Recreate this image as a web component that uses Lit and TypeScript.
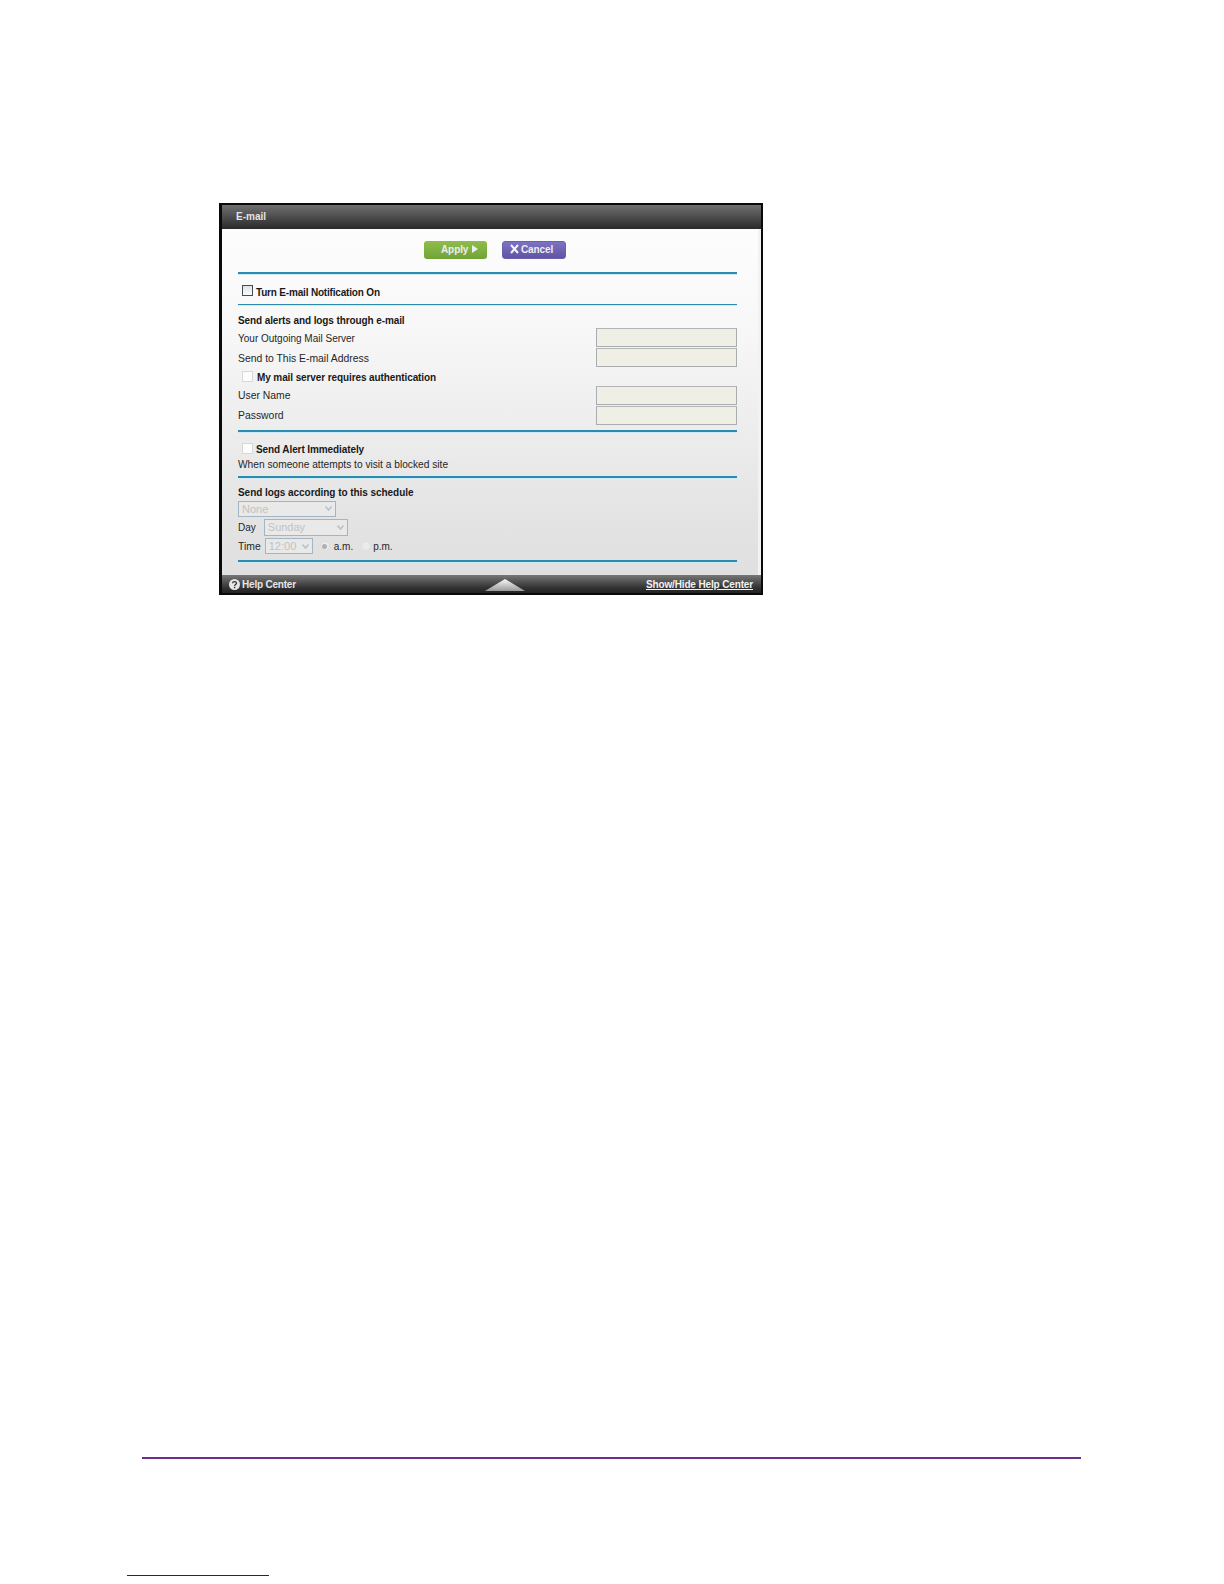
import { LitElement, html, css } from "lit";
import { customElement } from "lit/decorators.js";

@customElement("app-root")
export class AppRoot extends LitElement {
  static styles = css`
    :host { display: block; width: 1224px; height: 1584px; background: #fff; font-family: "Liberation Sans", Arial, sans-serif; overflow: hidden; }
    .page { height: 1584px; display: flex; flex-direction: column; box-sizing: border-box; padding-top: 203px; }
    .win { width: 544px; height: 392px; margin-left: 219px; box-sizing: border-box; border: 2px solid #0a0a0a; border-left-width: 3px; display: flex; flex-direction: column; background: #fff; flex: none; }
    .title { height: 24px; background: linear-gradient(#6f6f6f, #2a2a2a); color: #e4e4e4; font-size: 10px; font-weight: bold; display: flex; align-items: center; padding: 0 0 2px 14px; flex: none; box-sizing: border-box; }
    .body { flex: 1; background: linear-gradient(#fdfdfd, #f7f7f7 30%, #e3e3e3 85%, #e0e0e0); padding: 0 24px 0 16px; color: #262626; font-size: 10px; box-shadow: inset -3px 0 0 #f2f2f2; }
    .actions { height: 43px; display: flex; justify-content: center; align-items: flex-start; gap: 15px; padding: 12px 0 0 15px; box-sizing: border-box; }
    .btn { height: 18px; border-radius: 3px; color: #eee; font-size: 10px; letter-spacing: -0.1px; font-weight: bold; display: flex; align-items: center; box-sizing: border-box; padding-bottom: 2px; }
    .apply { width: 63px; background: linear-gradient(#8fbd4c, #70a336); padding-left: 17px; gap: 4px; }
    .cancel { width: 64px; background: linear-gradient(#7d72c4, #5f55a3); padding-left: 7px; gap: 2px; border: 1px solid #6a60ae; }
    .rule { height: 2px; background: #2c8cae; box-shadow: 0 1px 0 #cfe9f5; flex: none; }
    .rule.thin { height: 1px; }
    .row { display: flex; align-items: center; }
    .head { font-weight: bold; color: #191919; font-size: 10px; letter-spacing: -0.1px; }
    .check { width: 11px; height: 11px; box-sizing: border-box; border: 1px solid #d8d8d8; background: #fcfcfc; flex: none; }
    .check.up { margin-bottom: 2px; }
    .check.dark { border-color: #444c54; background: linear-gradient(#e0e3e6, #fafafa); margin-bottom: 3px; }
    .sec1 { height: 30px; padding: 6px 0 0 4px; gap: 3px; box-sizing: border-box; }
    .sec1 .head { letter-spacing: -0.18px; }
    .sec2 { height: 125px; display: flex; flex-direction: column; }
    .sec2 > .head { margin-top: 8px; height: 14px; display: flex; align-items: center; flex: none; }
    .field { display: flex; justify-content: space-between; align-items: center; height: 20px; flex: none; }
    .low { padding-top: 2px; }
    .wide { font-size: 10.4px; }
    .input { width: 141px; height: 19px; box-sizing: border-box; background: #f0efe6; border: 1px solid #a8adaf; border-top-color: #b4b4b4; }
    .auth { height: 18px; padding-left: 4px; gap: 4px; flex: none; }
    .auth .head { margin-top: 3px; }
    .sec3 { height: 44px; padding-top: 10px; box-sizing: border-box; }
    .sec3 .row { gap: 3px; padding-left: 4px; height: 15px; }
    .sec3 .sub { height: 14px; display: flex; align-items: center; font-size: 10.2px; }
    .sec4 { height: 82px; padding-top: 7px; box-sizing: border-box; }
    .sec4 > .head { height: 14px; display: flex; align-items: center; letter-spacing: -0.05px; }
    .select { height: 16px; box-sizing: border-box; border: 1px solid #a3b4c2; background: #e9e9e9; color: #c2c2c2; font-size: 11px; display: flex; align-items: center; justify-content: space-between; padding-left: 3px; }
    .select svg { flex: none; margin-right: 2px; }
    .sched { display: flex; align-items: center; height: 18px; }
    .sched.first { height: 19px; }
    .sched.last { height: 20px; }
    .s-none { width: 98px; }
    .s-day { width: 84px; height: 17px; margin-left: 8px; }
    .s-time { width: 48px; margin-left: 4px; }
    .radio { width: 10px; height: 10px; border-radius: 50%; border: 1px solid #dedede; box-sizing: border-box; background: #ebebeb; display: flex; align-items: center; justify-content: center; flex: none; }
    .radio i { width: 5px; height: 5px; border-radius: 50%; background: #b0b0b0; }
    .am { margin-left: 7px; }
    .pm { margin-left: 8px; }
    .am-t { margin-left: 4px; }
    .pm-t { margin-left: 2px; }
    .foot { height: 18px; flex: none; background: linear-gradient(#777, #333 70%, #222); color: #e6e6e6; font-size: 10px; font-weight: bold; display: flex; align-items: center; justify-content: space-between; padding: 0 8px 0 7px; position: relative; box-sizing: border-box; }
    .foot .left { display: flex; align-items: center; gap: 2px; letter-spacing: -0.2px; }
    .foot u { color: #f2f2f2; letter-spacing: -0.14px; }
    .tri { position: absolute; left: 263px; bottom: 2px; }
    .gap-p { height: 862px; flex: none; }
    .purple { height: 1.5px; background: #6e2c8c; margin-left: 142px; width: 939px; flex: none; }
    .gap-b { height: 116px; flex: none; }
    .blue { height: 1.5px; background: #1a1a9e; margin-left: 127px; width: 142px; flex: none; }
  `;

  render() {
    const arrow = html`<svg width="9" height="7" viewBox="0 0 9 7"><path d="M1.5 1.5 L4.5 5 L7.5 1.5" fill="none" stroke="#b8c2cc" stroke-width="1.6"/></svg>`;
    return html`
      <div class="page">
        <div class="win">
          <div class="title">E-mail</div>
          <div class="body">
            <div class="actions">
              <div class="btn apply">Apply<svg width="6" height="8" viewBox="0 0 6 8"><path d="M0 0 L6 4 L0 8Z" fill="#eee"/></svg></div>
              <div class="btn cancel"><svg width="9" height="10" viewBox="0 0 9 10"><path d="M1 1 L8 9 M8 1 L1 9" stroke="#f4f4f4" stroke-width="2"/></svg>Cancel</div>
            </div>
            <div class="rule"></div>
            <div class="row sec1"><span class="check dark"></span><span class="head">Turn E-mail Notification On</span></div>
            <div class="rule thin"></div>
            <div class="sec2">
              <div class="head">Send alerts and logs through e-mail</div>
              <div class="field"><span class="low">Your Outgoing Mail Server</span><span class="input"></span></div>
              <div class="field"><span class="wide low">Send to This E-mail Address</span><span class="input"></span></div>
              <div class="row auth"><span class="check"></span><span class="head">My mail server requires authentication</span></div>
              <div class="field"><span class="wide">User Name</span><span class="input"></span></div>
              <div class="field"><span class="wide">Password</span><span class="input"></span></div>
            </div>
            <div class="rule"></div>
            <div class="sec3">
              <div class="row"><span class="check up"></span><span class="head">Send Alert Immediately</span></div>
              <div class="sub">When someone attempts to visit a blocked site</div>
            </div>
            <div class="rule"></div>
            <div class="sec4">
              <div class="head">Send logs according to this schedule</div>
              <div class="sched first"><span class="select s-none">None ${arrow}</span></div>
              <div class="sched"><span>Day</span><span class="select s-day">Sunday ${arrow}</span></div>
              <div class="sched last"><span class="wide">Time</span><span class="select s-time">12:00 ${arrow}</span>
                <span class="radio am"><i></i></span><span class="am-t">a.m.</span>
                <span class="radio pm"></span><span class="pm-t">p.m.</span>
              </div>
            </div>
            <div class="rule"></div>
          </div>
          <div class="foot">
            <span class="left"><svg width="11" height="11" viewBox="0 0 11 11"><circle cx="5.5" cy="5.5" r="5.5" fill="#e6e6e6"/><path d="M3.6 4.2 C3.6 2.2 7.5 2.2 7.5 4.2 C7.5 5.6 5.6 5.4 5.6 7" fill="none" stroke="#333" stroke-width="1.3"/><rect x="4.9" y="7.8" width="1.4" height="1.4" fill="#333"/></svg>Help Center</span>
            <svg class="tri" width="40" height="12" viewBox="0 0 40 12"><defs><linearGradient id="g" x1="0" y1="0" x2="0" y2="1"><stop offset="0" stop-color="#fafafa"/><stop offset="1" stop-color="#9a9a9a"/></linearGradient></defs><path d="M0 12 L20 0 L40 12Z" fill="url(#g)"/></svg>
            <u>Show/Hide Help Center</u>
          </div>
        </div>
        <div class="gap-p"></div>
        <div class="purple"></div>
        <div class="gap-b"></div>
        <div class="blue"></div>
      </div>
    `;
  }
}
